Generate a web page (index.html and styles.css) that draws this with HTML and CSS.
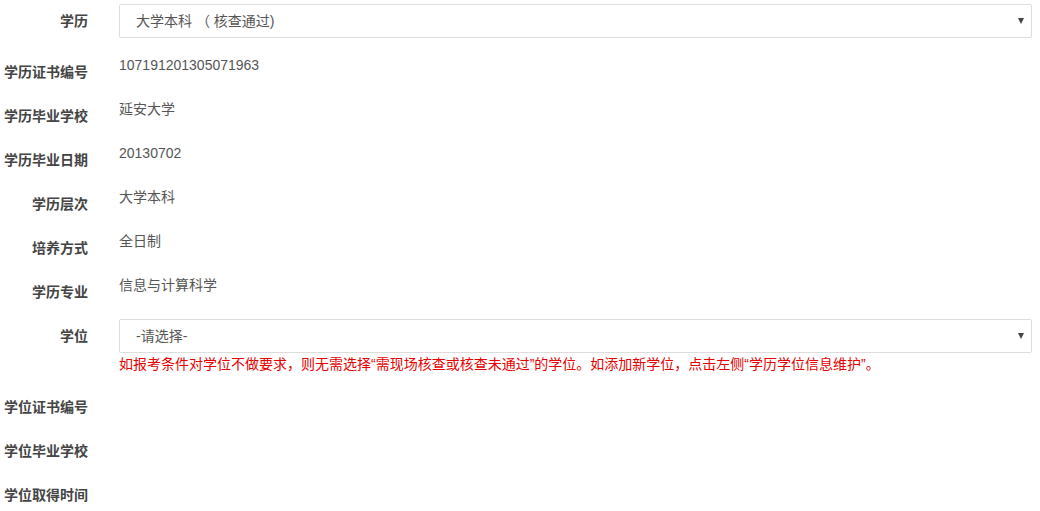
FILE: index.html
```html
<!DOCTYPE html>
<html lang="zh-CN">
<head>
    <meta charset="UTF-8">
    <title>学历学位信息</title>
    <link rel="stylesheet" href="styles.css">
</head>
<body>
    <form class="edu-form">
        <div class="row row-select first">
            <label class="row-label">学历</label>
            <div class="row-value">
                <div class="select-wrap">
                    <select class="form-select">
                        <option selected>大学本科 （ 核查通过)</option>
                    </select>
                </div>
            </div>
        </div>
        <div class="row">
            <label class="row-label">学历证书编号</label>
            <div class="row-value">107191201305071963</div>
        </div>
        <div class="row">
            <label class="row-label">学历毕业学校</label>
            <div class="row-value">延安大学</div>
        </div>
        <div class="row">
            <label class="row-label">学历毕业日期</label>
            <div class="row-value">20130702</div>
        </div>
        <div class="row">
            <label class="row-label">学历层次</label>
            <div class="row-value">大学本科</div>
        </div>
        <div class="row">
            <label class="row-label">培养方式</label>
            <div class="row-value">全日制</div>
        </div>
        <div class="row">
            <label class="row-label">学历专业</label>
            <div class="row-value">信息与计算科学</div>
        </div>
        <div class="row row-select">
            <label class="row-label">学位</label>
            <div class="row-value">
                <div class="select-wrap">
                    <select class="form-select">
                        <option selected>-请选择-</option>
                    </select>
                </div>
                <p class="hint">如报考条件对学位不做要求，则无需选择“需现场核查或核查未通过”的学位。如添加新学位，点击左侧“学历学位信息维护”。</p>
            </div>
        </div>
        <div class="row">
            <label class="row-label">学位证书编号</label>
            <div class="row-value"></div>
        </div>
        <div class="row">
            <label class="row-label">学位毕业学校</label>
            <div class="row-value"></div>
        </div>
        <div class="row">
            <label class="row-label">学位取得时间</label>
            <div class="row-value"></div>
        </div>
    </form>
</body>
</html>
```

FILE: styles.css
```css
body {
    margin: 0;
    font-family: "Liberation Sans", "Noto Sans CJK SC", sans-serif;
    font-size: 14px;
    color: #555;
    background: #fff;
}
.edu-form {
    width: 1032px;
}
.row {
    display: flex;
    height: 44px;
}
.row-label {
    flex: 0 0 88px;
    text-align: right;
    font-weight: bold;
    color: #444;
    line-height: 20px;
    padding-top: 7px;
    white-space: nowrap;
}
.row-value {
    flex: 1;
    margin-left: 31px;
    line-height: 20px;
}
.row-select {
    height: auto;
    margin-bottom: 17px;
}
.row-select.first {
    margin-top: 4px;
}
.select-wrap {
    position: relative;
}
.select-wrap::after {
    content: "";
    position: absolute;
    right: 8px;
    top: 14px;
    border-left: 3px solid transparent;
    border-right: 3px solid transparent;
    border-top: 6px solid #444;
    pointer-events: none;
}
.form-select {
    display: block;
    width: 100%;
    height: 34px;
    padding: 0 16px;
    font-family: inherit;
    font-size: 14px;
    color: #555;
    background: #fff;
    border: 1px solid #ddd;
    border-radius: 2px;
    appearance: none;
    -webkit-appearance: none;
    outline: none;
}
.hint {
    margin: 2px 0 0;
    color: #e60000;
    font-size: 14px;
    line-height: 18px;
    white-space: nowrap;
}
```
